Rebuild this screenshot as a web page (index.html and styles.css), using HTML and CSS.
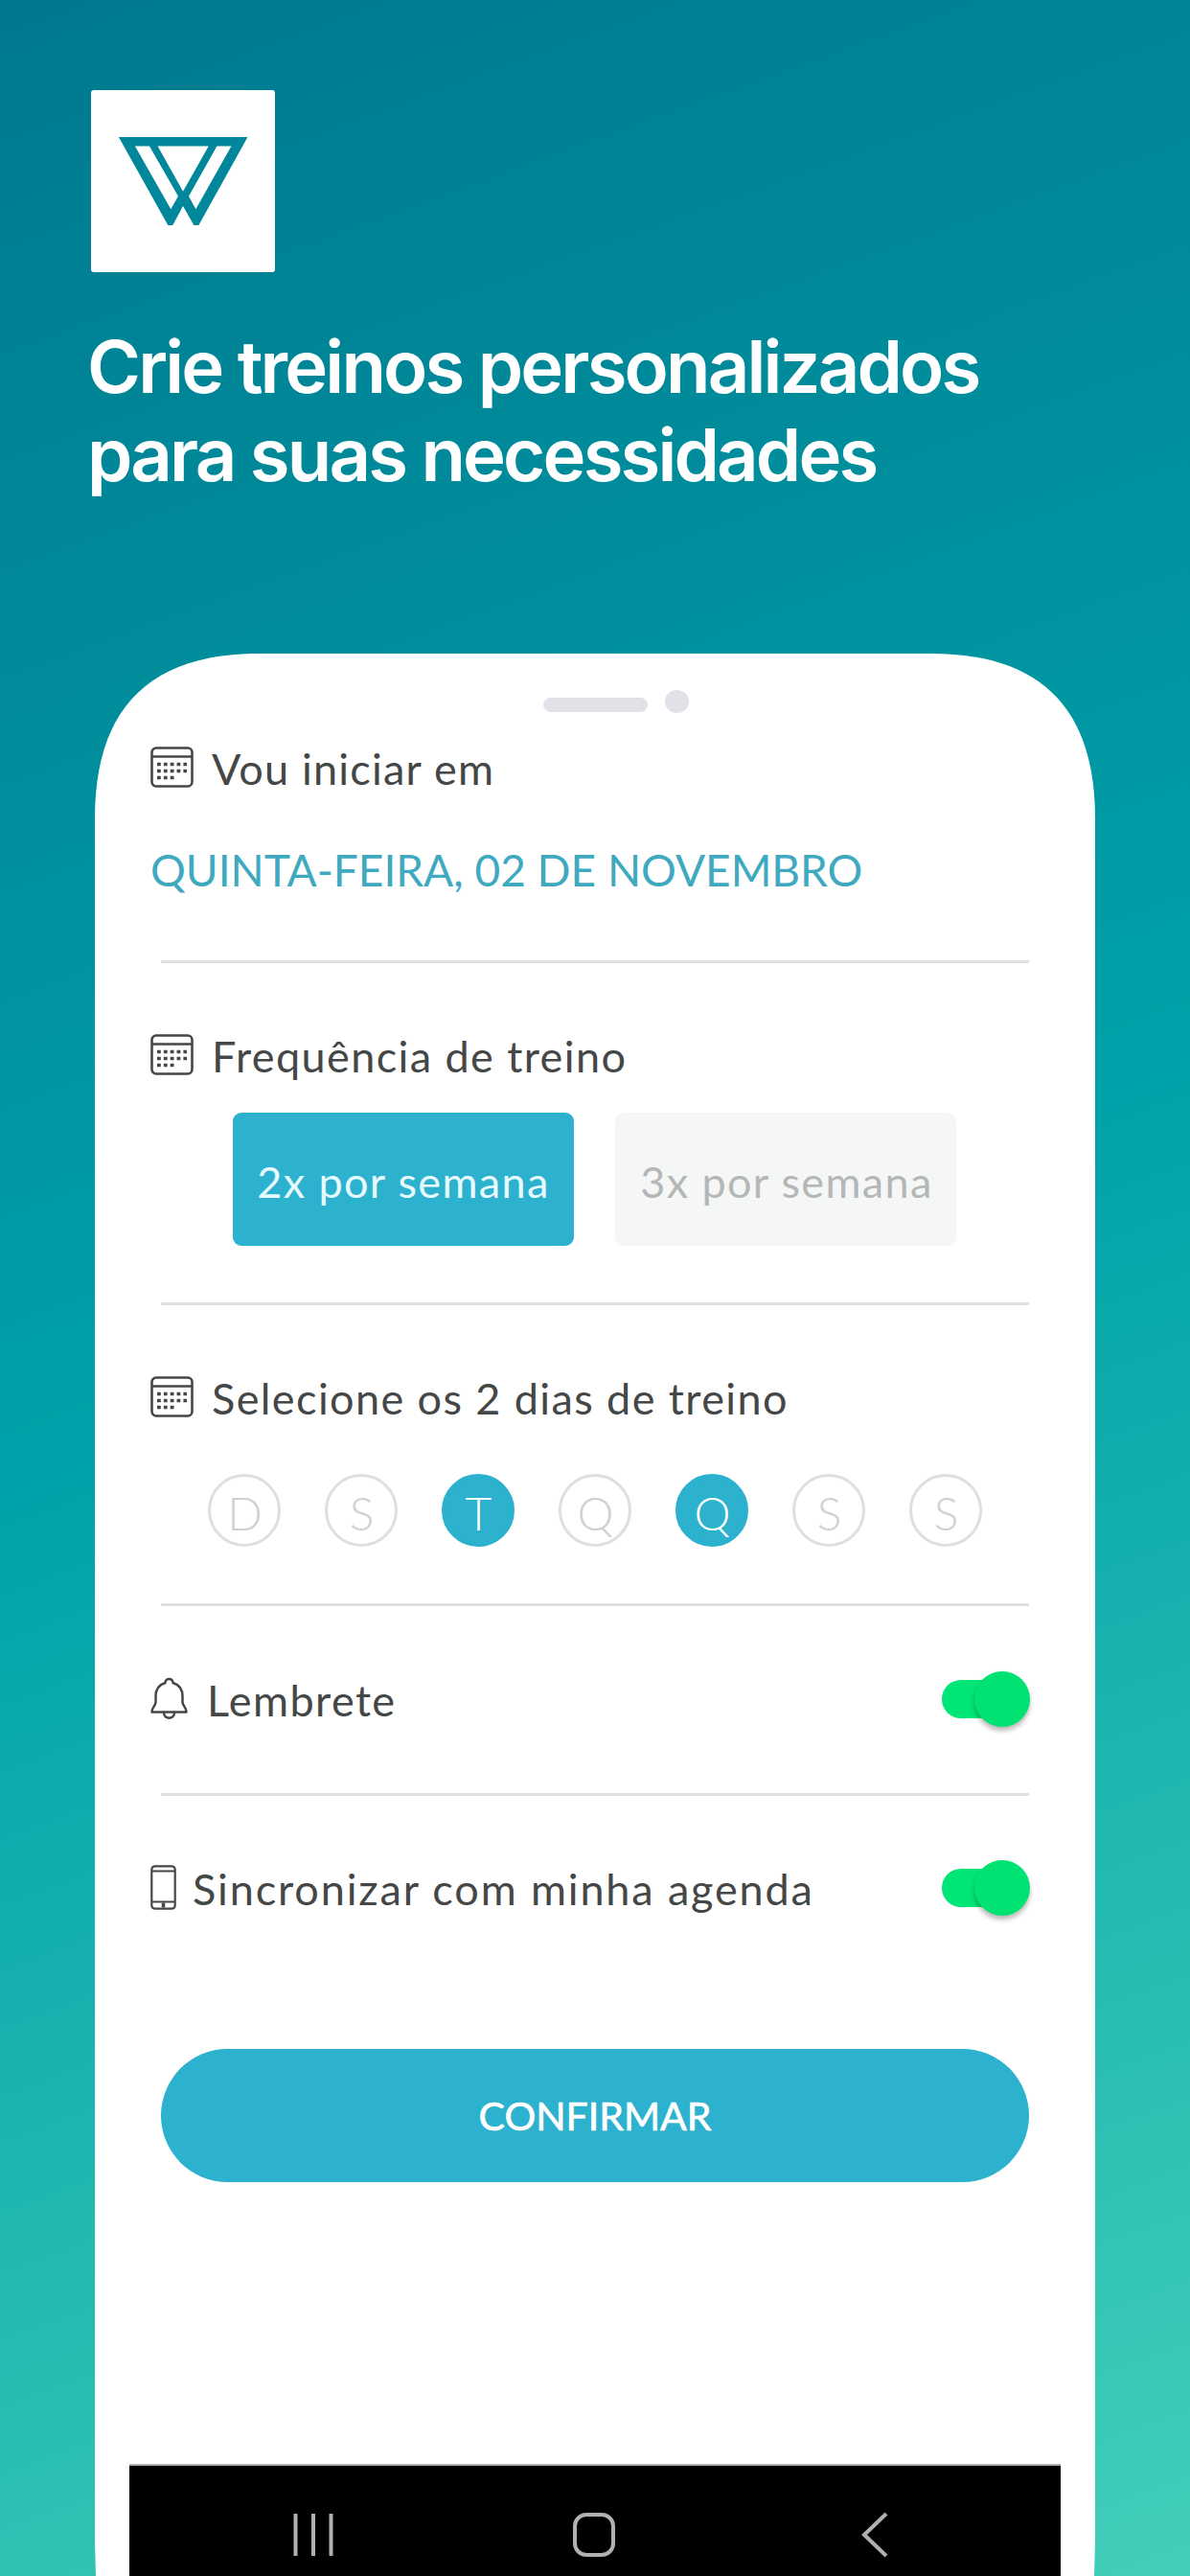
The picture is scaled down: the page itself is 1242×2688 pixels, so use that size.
FILE: index.html
```html
<!DOCTYPE html>
<html lang="pt-BR">
<head>
  <meta charset="UTF-8" />
  <meta name="viewport" content="width=device-width, initial-scale=1.0" />
  <title>Crie treinos personalizados</title>
  <link rel="stylesheet" href="styles.css">
</head>
<body>
  <!-- Shared icons -->
  <svg class="defs" width="0" height="0">
    <symbol id="calendar" viewBox="0 0 45 43">
      <rect x="1.5" y="1.5" width="42" height="40" rx="4.5" fill="none" stroke="currentColor" stroke-width="2.6"/>
      <path d="M1.5 10.5H43.5" stroke="currentColor" stroke-width="2.6"/>
      <path d="M7 18.5H38M7 25.5H38M7 32.5H25" stroke="currentColor" stroke-width="3.6" stroke-dasharray="3.8 3.05"/>
    </symbol>
  </svg>

  <header class="hero">
    <div class="logo">
      <svg viewBox="46 43 574 569">
        <path fill="#00879b" fill-rule="evenodd" d="M132 190H535L382 465H367L333 405L301 465H286ZM183 218L295 415L318 375L228 218ZM254 218L333 360L413 218ZM439 218L351 375L373 415L484 218Z"/>
      </svg>
    </div>
    <h1>Crie treinos personalizados<br>para suas necessidades</h1>
  </header>

  <main class="phone">
    <div class="speaker">
      <span class="bar"></span>
      <span class="camera"></span>
    </div>

    <section class="start">
      <div class="row">
        <svg class="icon calendar"><use href="#calendar"/></svg>
        <h2>Vou iniciar em</h2>
      </div>
      <p class="date">QUINTA-FEIRA, 02 DE NOVEMBRO</p>
    </section>
    <hr>

    <section class="frequency">
      <div class="row">
        <svg class="icon calendar"><use href="#calendar"/></svg>
        <h2>Frequência de treino</h2>
      </div>
      <div class="options">
        <button class="option selected">2x por semana</button>
        <button class="option">3x por semana</button>
      </div>
    </section>
    <hr>

    <section class="weekdays">
      <div class="row">
        <svg class="icon calendar"><use href="#calendar"/></svg>
        <h2>Selecione os 2 dias de treino</h2>
      </div>
      <div class="days">
        <span class="day">D</span>
        <span class="day">S</span>
        <span class="day selected">T</span>
        <span class="day">Q</span>
        <span class="day selected">Q</span>
        <span class="day">S</span>
        <span class="day">S</span>
      </div>
    </section>
    <hr>

    <section class="reminder">
      <div class="row">
        <svg class="icon bell" viewBox="0 0 39 44" fill="none" stroke="currentColor" stroke-width="2.5" stroke-linejoin="round">
          <path d="M15.5 6C15.5 0.5 23.5 0.5 23.5 6C30 8 33.5 13.5 33.5 20V26C33.5 30 37.5 31 37.5 36.5H1.5C1.5 31 5.5 30 5.5 26V20C5.5 13.5 9 8 15.5 6Z"/>
          <path d="M14 37C14 44.5 25 44.5 25 37"/>
        </svg>
        <h2>Lembrete</h2>
        <span class="toggle"></span>
      </div>
    </section>
    <hr>

    <section class="sync">
      <div class="row">
        <svg class="icon mobile" viewBox="0 0 27 47" fill="none" stroke="currentColor" stroke-width="2.2">
          <rect x="1.3" y="1.3" width="24.4" height="44.4" rx="3.5"/>
          <path d="M1 6.5H26M1 38.5H26"/>
          <path d="M13.5 39.5V44.5" stroke-width="3.5"/>
        </svg>
        <h2>Sincronizar com minha agenda</h2>
        <span class="toggle"></span>
      </div>
    </section>

    <button class="confirm">CONFIRMAR</button>

    <nav class="navbar">
      <svg viewBox="0 0 48 48"><path d="M5.5 2V46M24 2V46M42.5 2V46"/></svg>
      <svg viewBox="0 0 48 48"><rect x="4" y="3" width="40" height="42" rx="12"/></svg>
      <svg viewBox="0 0 48 48"><path d="M36 2L13 24L36 46"/></svg>
    </nav>
  </main>
</body>
</html>
```
FILE: styles.css
```css
* {
  box-sizing: border-box;
  margin: 0;
  padding: 0;
}
body {
  width: 1242px;
  height: 2688px;
  overflow: hidden;
  font-family: Lato, "Open Sans", sans-serif;
  color: #454747;
  background: linear-gradient(160deg, #00788f 0%, #00a2a9 50%, #42cfb9 100%);
}
.defs {
  position: absolute;
}

/* Heading */
.hero {
  padding: 94px 0 0 95px;
}
.logo {
  width: 192px;
  height: 190px;
  border-radius: 3px;
  background: #fff;
}
.logo svg {
  display: block;
  width: 192px;
  height: 190px;
}
h1 {
  margin: 52px 0 0 -4px;
  font-family: Inter, sans-serif;
  font-size: 76px;
  font-weight: 600;
  line-height: 92px;
  letter-spacing: -2.85px;
  color: #fff;
  white-space: nowrap;
}

/* Phone */
.phone {
  display: flex;
  flex-direction: column;
  width: 1044px;
  height: 2006px;
  margin: 162px 0 0 99px;
  background: #fff;
  clip-path: path("M1 2006L0 1970V172C0 57 57 0 172 0H872C987 0 1044 57 1044 172V1970L1043 2006Z");
}
.speaker {
  display: flex;
  gap: 18px;
  height: 90px;
  padding: 38px 0 0 468px;
}
.bar {
  width: 109px;
  height: 15px;
  margin-top: 8px;
  border-radius: 8px;
  background: #e2e1e8;
}
.camera {
  width: 25px;
  height: 24px;
  border-radius: 50%;
  background: #e2e1e8;
}
section {
  padding: 0 69px 0 58px;
}
hr {
  height: 3px;
  flex-shrink: 0;
  margin: 0 69px;
  border: none;
  background: #dfdfdf;
}
.row {
  display: flex;
  align-items: center;
  height: 60px;
}
h2 {
  font-size: 45px;
  font-weight: 400;
  line-height: 60px;
  letter-spacing: 1.4px;
  white-space: nowrap;
}
.icon {
  flex-shrink: 0;
  margin-bottom: 4px;
}
.calendar {
  width: 45px;
  height: 43px;
  margin-right: 19px;
}
.bell {
  width: 39px;
  height: 44px;
  margin-right: 20px;
}
.mobile {
  width: 27px;
  height: 47px;
  margin-right: 17px;
}

.start {
  height: 230px;
}
.start h2 {
  letter-spacing: 1.2px;
}
.date {
  margin-top: 46px;
  font-size: 46px;
  line-height: 60px;
  color: #3fa9bf;
  white-space: nowrap;
}

/* Frequency buttons */
.frequency {
  height: 354px;
  padding-top: 67px;
}
.options {
  display: flex;
  gap: 43px;
  margin: 29px 0 0 86px;
}
.option {
  width: 356px;
  height: 139px;
  padding: 4px 0 0 2px;
  border: none;
  border-radius: 9px;
  background: #f5f7f7;
  font-family: inherit;
  font-size: 45px;
  letter-spacing: 1.35px;
  color: #b5b7b7;
}
.option.selected {
  padding-left: 0;
  background: #2cb1ce;
  color: #e6fbff;
}

/* Weekdays */
.weekdays {
  height: 311px;
  padding-top: 67px;
}
.days {
  display: flex;
  gap: 46px;
  margin: 49px 0 0 60px;
}
.day {
  width: 76px;
  height: 76px;
  border: 3px solid #dfdfdf;
  border-radius: 50%;
  padding: 5px 0 0 1px;
  font-size: 48px;
  font-weight: 300;
  line-height: 66px;
  text-align: center;
  color: #d0d0d0;
}
.day.selected {
  border-color: #2cb1ce;
  background: #2cb1ce;
  color: #fff;
}

/* Switches */
.reminder {
  height: 195px;
  padding-top: 68px;
}
.sync {
  height: 264px;
  padding-top: 67px;
}
.sync h2 {
  letter-spacing: 1.85px;
}
.toggle {
  position: relative;
  width: 72px;
  height: 40px;
  margin: 0 19px 2px auto;
  border-radius: 20px;
  background: #00e676;
}
.toggle::after {
  content: "";
  position: absolute;
  top: -9px;
  left: 34px;
  width: 58px;
  height: 58px;
  border-radius: 50%;
  background: #00e272;
  box-shadow: 0 4px 5px rgba(0, 0, 0, 0.28);
}

.confirm {
  flex-shrink: 0;
  width: 906px;
  height: 139px;
  margin-left: 69px;
  border: none;
  border-radius: 70px;
  background: #2cb1ce;
  font-family: inherit;
  font-size: 41px;
  color: #fff;
  -webkit-text-stroke: 0.7px #fff;
}

/* Android navigation */
.navbar {
  display: flex;
  justify-content: space-between;
  flex-shrink: 0;
  width: 972px;
  height: 117px;
  margin: auto 0 0 36px;
  padding: 48px 170px 0 168px;
  border-top: 2px solid #b0b0b0;
  background: #000;
}
.navbar svg {
  width: 48px;
  height: 48px;
  fill: none;
  stroke: #b0b0b0;
  stroke-width: 4;
}
```
